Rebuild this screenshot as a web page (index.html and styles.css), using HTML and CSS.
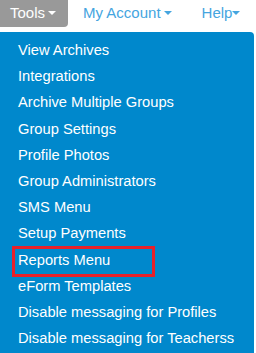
FILE: index.html
```html
<!DOCTYPE html>
<html lang="en">
<head>
  <meta charset="UTF-8">
  <meta name="viewport" content="width=device-width, initial-scale=1.0">
  <link rel="stylesheet" href="styles.css">
  <title>Tools Menu</title>
</head>
<body>

  <div class="navbar">
    <a class="nav-item active" href="#">Tools <span class="caret"></span></a>
    <a class="nav-item" href="#">My Account <span class="caret"></span></a>
    <a class="nav-item help" href="#">Help<span class="caret"></span></a>
  </div>

  <ul class="dropdown-menu">
    <li><a href="#">View Archives</a></li>
    <li><a href="#">Integrations</a></li>
    <li><a href="#">Archive Multiple Groups</a></li>
    <li><a href="#">Group Settings</a></li>
    <li><a href="#">Profile Photos</a></li>
    <li><a href="#">Group Administrators</a></li>
    <li><a href="#">SMS Menu</a></li>
    <li><a href="#">Setup Payments</a></li>
    <li class="marked"><a href="#">Reports Menu</a><span class="highlight"></span></li>
    <li><a href="#">eForm Templates</a></li>
    <li><a href="#">Disable messaging for Profiles</a></li>
    <li><a href="#">Disable messaging for Teacherss</a></li>
  </ul>

</body>
</html>
```

FILE: styles.css
```css
body {
  font-family: 'Liberation Sans', Arial, sans-serif;
  margin: 0;
  background: #fff;
}

.navbar {
  display: flex;
  height: 27px;
  align-items: stretch;
}

.nav-item {
  display: flex;
  align-items: center;
  gap: 3px;
  padding: 0 12px 2px 15px;
  font-size: 15px;
  color: #45a5df;
  text-decoration: none;
}

.nav-item.active {
  padding-left: 10px;
  background: #999;
  color: #fff;
  border-bottom-right-radius: 4px;
}

.nav-item.help {
  gap: 0;
  padding-left: 18px;
}

.caret {
  display: inline-block;
  width: 0;
  height: 0;
  border-top: 4px solid;
  border-left: 4px solid transparent;
  border-right: 4px solid transparent;
}

.dropdown-menu {
  list-style: none;
  margin: 5px 0 0;
  padding: 5px 0;
  width: 254px;
  background: #0088cc;
  border-top-right-radius: 4px;
}

.dropdown-menu li {
  position: relative;
}

.dropdown-menu a {
  display: block;
  padding: 3px 18px;
  line-height: 20.2px;
  font-size: 14.7px;
  color: #fff;
  text-decoration: none;
  white-space: nowrap;
}

.highlight {
  position: absolute;
  left: 12px;
  top: -1px;
  width: 143px;
  height: 31px;
  border: 3px solid #e8202a;
  box-sizing: border-box;
}
```
